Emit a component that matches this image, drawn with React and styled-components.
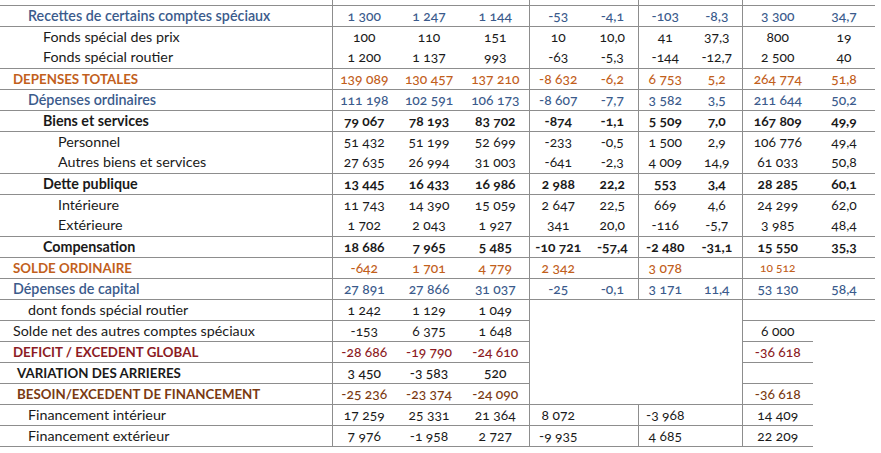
import styled, { createGlobalStyle } from 'styled-components';

const GlobalStyle = createGlobalStyle`
  body {
    margin: 0;
    background: #fff;
    font-family: Lato, "Open Sans", sans-serif;
  }
`;

const tones = {
  plain: '#1a1a1a',
  blue: '#3b5b8c',
  orange: '#c2601c',
  red: '#8c1b24',
  brown: '#7a3a12',
};

const LINE = '1px solid #8d8d8d';

const Table = styled.table`
  width: 875px;
  table-layout: fixed;
  border-collapse: collapse;
  font-size: 13.5px;
  font-variant-numeric: oldstyle-nums;
`;

const Row = styled.tr`
  height: 21px;
  color: ${(p) => tones[p.$tone]};
`;

const TopRow = styled.tr`
  height: 5px;
`;

const Cell = styled.td`
  padding: 0;
  line-height: 20px;
  white-space: nowrap;
  border-bottom: ${(p) => (p.$bottom ? LINE : 'none')};
  border-right: ${(p) => (p.$right ? LINE : 'none')};
`;

const Label = styled(Cell)`
  padding-left: ${(p) => p.$indent}px;
  font-weight: ${(p) => p.$labelWeight};
  font-size: ${(p) => (p.$caps ? '13.3px' : '14.3px')};
`;

const Num = styled(Cell)`
  text-align: center;
  font-weight: ${(p) => p.$numWeight};
  font-size: ${(p) => (p.$small ? '12px' : '13.8px')};
`;

const widths = [332, 64, 66, 67, 58, 51, 54, 50, 71, 62];
const ALL = [0, 1, 2, 3, 4, 5, 6, 7, 8, 9];
const LOW = [0, 1, 2, 3, 8];
const WIDE = [0, 1, 2, 3, 4, 5, 6, 7, 8];

const rows = [
  { label: 'Recettes de certains comptes spéciaux', indent: 28, tone: 'blue', lw: 600, nw: 500, v: ['1 300', '1 247', '1 144', '-53', '-4,1', '-103', '-8,3', '3 300', '34,7'], bottom: ALL },
  { label: 'Fonds spécial des prix', indent: 43, tone: 'plain', lw: 400, nw: 400, v: ['100', '110', '151', '10', '10,0', '41', '37,3', '800', '19'], bottom: [] },
  { label: 'Fonds spécial routier', indent: 43, tone: 'plain', lw: 400, nw: 400, v: ['1 200', '1 137', '993', '-63', '-5,3', '-144', '-12,7', '2 500', '40'], bottom: ALL },
  { label: 'DEPENSES TOTALES', caps: true, indent: 13, tone: 'orange', lw: 700, nw: 500, v: ['139 089', '130 457', '137 210', '-8 632', '-6,2', '6 753', '5,2', '264 774', '51,8'], bottom: ALL },
  { label: 'Dépenses ordinaires', indent: 28, tone: 'blue', lw: 600, nw: 500, v: ['111 198', '102 591', '106 173', '-8 607', '-7,7', '3 582', '3,5', '211 644', '50,2'], bottom: ALL },
  { label: 'Biens et services', indent: 43, tone: 'plain', lw: 700, nw: 700, v: ['79 067', '78 193', '83 702', '-874', '-1,1', '5 509', '7,0', '167 809', '49,9'], bottom: ALL },
  { label: 'Personnel', indent: 58, tone: 'plain', lw: 400, nw: 400, v: ['51 432', '51 199', '52 699', '-233', '-0,5', '1 500', '2,9', '106 776', '49,4'], bottom: [] },
  { label: 'Autres biens et services', indent: 58, tone: 'plain', lw: 400, nw: 400, v: ['27 635', '26 994', '31 003', '-641', '-2,3', '4 009', '14,9', '61 033', '50,8'], bottom: ALL },
  { label: 'Dette publique', indent: 43, tone: 'plain', lw: 700, nw: 700, v: ['13 445', '16 433', '16 986', '2 988', '22,2', '553', '3,4', '28 285', '60,1'], bottom: ALL },
  { label: 'Intérieure', indent: 58, tone: 'plain', lw: 400, nw: 400, v: ['11 743', '14 390', '15 059', '2 647', '22,5', '669', '4,6', '24 299', '62,0'], bottom: [] },
  { label: 'Extérieure', indent: 58, tone: 'plain', lw: 400, nw: 400, v: ['1 702', '2 043', '1 927', '341', '20,0', '-116', '-5,7', '3 985', '48,4'], bottom: ALL },
  { label: 'Compensation', indent: 43, tone: 'plain', lw: 700, nw: 700, v: ['18 686', '7 965', '5 485', '-10 721', '-57,4', '-2 480', '-31,1', '15 550', '35,3'], bottom: ALL },
  { label: 'SOLDE ORDINAIRE', caps: true, indent: 13, tone: 'orange', lw: 700, nw: 500, v: ['-642', '1 701', '4 779', '2 342', '', '3 078', '', '10 512', ''], bottom: ALL, small: [8] },
  { label: 'Dépenses de capital', indent: 13, tone: 'blue', lw: 600, nw: 500, v: ['27 891', '27 866', '31 037', '-25', '-0,1', '3 171', '11,4', '53 130', '58,4'], bottom: ALL },
  { label: 'dont fonds spécial routier', indent: 28, tone: 'plain', lw: 400, nw: 400, v: ['1 242', '1 129', '1 049', '', '', '', '', '', ''], bottom: [0, 1, 2, 3, 8, 9], gap: true },
  { label: 'Solde net des autres comptes spéciaux', indent: 13, tone: 'plain', lw: 400, nw: 400, v: ['-153', '6 375', '1 648', '', '', '', '', '6 000', ''], bottom: LOW, gap: true },
  { label: 'DEFICIT / EXCEDENT GLOBAL', caps: true, indent: 13, tone: 'red', lw: 700, nw: 500, v: ['-28 686', '-19 790', '-24 610', '', '', '', '', '-36 618', ''], bottom: LOW, gap: true },
  { label: 'VARIATION DES ARRIERES', caps: true, indent: 17, tone: 'plain', lw: 700, nw: 500, v: ['3 450', '-3 583', '520', '', '', '', '', '', ''], bottom: LOW, gap: true },
  { label: 'BESOIN/EXCEDENT DE FINANCEMENT', caps: true, indent: 17, tone: 'brown', lw: 700, nw: 500, v: ['-25 236', '-23 374', '-24 090', '', '', '', '', '-36 618', ''], bottom: WIDE, gap: true },
  { label: 'Financement intérieur', indent: 28, tone: 'plain', lw: 400, nw: 400, v: ['17 259', '25 331', '21 364', '8 072', '', '-3 968', '', '14 409', ''], bottom: WIDE },
  { label: 'Financement extérieur', indent: 28, tone: 'plain', lw: 400, nw: 400, v: ['7 976', '-1 958', '2 727', '-9 935', '', '4 685', '', '22 209', ''], bottom: WIDE },
];

const hasRight = (col, gap) => col === 0 || col === 3 || col === 7 || (col === 5 && !gap);

export default function App() {
  return (
    <>
      <GlobalStyle />
      <Table>
        <colgroup>
          {widths.map((w, i) => (
            <col key={i} style={{ width: w }} />
          ))}
        </colgroup>
        <tbody>
          <TopRow>
            {widths.map((_, i) => (
              <Cell key={i} $bottom $right={hasRight(i, false)} />
            ))}
          </TopRow>
          {rows.map((r, ri) => (
            <Row key={ri} $tone={r.tone}>
              <Label
                $indent={r.indent}
                $caps={r.caps}
                $labelWeight={r.lw}
                $bottom={r.bottom.includes(0)}
                $right
              >
                {r.label}
              </Label>
              {r.v.map((val, ci) => (
                <Num
                  key={ci}
                  $numWeight={r.nw}
                  $small={r.small && r.small.includes(ci + 1)}
                  $bottom={r.bottom.includes(ci + 1)}
                  $right={hasRight(ci + 1, r.gap)}
                >
                  {val}
                </Num>
              ))}
            </Row>
          ))}
        </tbody>
      </Table>
    </>
  );
}
